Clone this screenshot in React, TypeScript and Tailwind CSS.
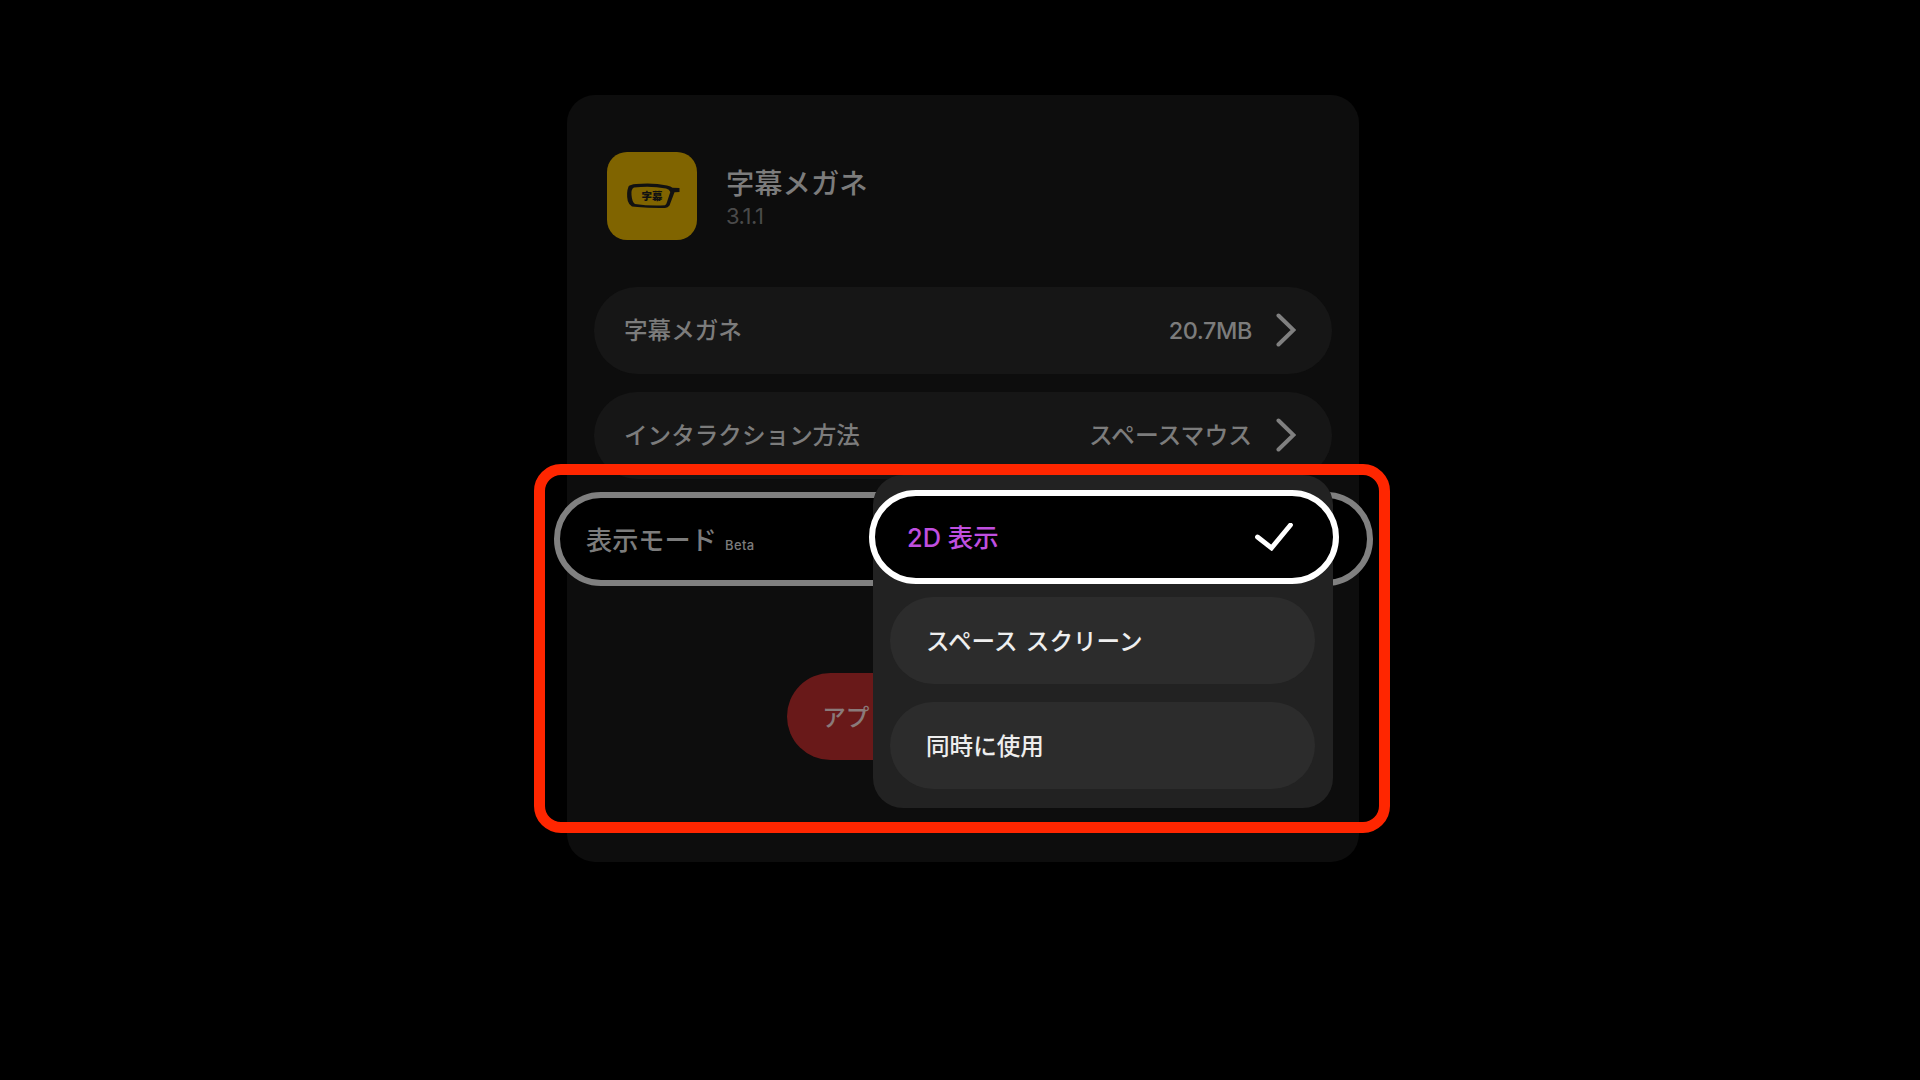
import { useState } from 'react';

const ROWS = [
  { label: '字幕メガネ', value: '20.7MB', latin: true },
  { label: 'インタラクション方法', value: 'スペースマウス', latin: false },
];

const OPTIONS = ['スペース スクリーン', '同時に使用'];

function AppIcon() {
  return (
    <div className="w-[90px] h-[88px] rounded-[20px] bg-[#806400] shrink-0">
      <svg viewBox="0 0 90 88" className="w-full h-full">
        <path
          fillRule="evenodd"
          fill="#111"
          d="M21.5 34.5 Q23 32.5 29 32 Q46 30.5 60 33.4 Q64 34.3 65.5 35.8 L72.5 36 L72.5 40 L67.5 40.3 L62.5 53.5 Q61 55.9 58 56 Q43 56.3 30.5 55 L25 54.5 Q22 53 20.8 49 Q19 41 21.5 34.5 Z M27 35.5 Q23.8 37 24.5 43 Q25 50 28 52 Q43 54.2 58 53.3 Q59.2 53 60 50 L63.3 40 Q62.5 37.5 59 36.6 Q44 33.5 27 35.5 Z"
        />
        <text x="34.5" y="48" fontSize="10.5" fontWeight="900" fill="#111" fontFamily="Noto Sans CJK JP, sans-serif">字幕</text>
      </svg>
    </div>
  );
}

function Chevron() {
  return (
    <svg width="20" height="34" viewBox="0 0 20 34" fill="none" className="ml-6 mb-[2px] shrink-0">
      <path d="M2.5 2.5 L17.5 17 L2.5 31.5" stroke="#808080" strokeWidth="4" strokeLinecap="round" />
    </svg>
  );
}

export default function App() {
  const [selected] = useState('2D 表示');

  return (
    <div className="relative w-[1920px] h-[1080px] overflow-hidden bg-black pt-[95px] pl-[567px] font-['Inter','Noto_Sans_CJK_JP',sans-serif] font-medium text-[23.6px] leading-none text-[#7c7c7c]">
      <div className="w-[792px] h-[767px] rounded-[28px] bg-[#0d0d0d] px-[27px] pt-[57px]">
        <div className="flex pl-[13px] h-[135px]">
          <AppIcon />
          <div className="ml-[29px] pt-[18px]">
            <h1 className="text-[28.3px] leading-[28px]">字幕メガネ</h1>
            <p className="mt-[7px] text-[22px] leading-[22px] tracking-[-0.5px] font-normal text-[#4a4a4a]">3.1.1</p>
          </div>
        </div>

        <div className="flex flex-col gap-[18px]">
          {ROWS.map(row => (
            <div key={row.label} className="flex items-center h-[87px] rounded-full bg-[#161616] pl-[30px] pr-9">
              <span className="mt-px">{row.label}</span>
              <span className={row.latin ? 'ml-auto text-[23.4px] tracking-[-0.4px]' : 'ml-auto mt-px text-[23.8px]'}>{row.value}</span>
              <Chevron />
            </div>
          ))}
        </div>

        {/* Focused row, wider than the card */}
        <div className="-mx-[40px] w-[819px] mt-[13px] h-[94px] flex items-center rounded-full border-[6px] border-[#808080] bg-black pl-[26px]">
          <span className="mt-[5px] text-[26.2px]">表示モード</span>
          <span className="ml-2 mt-[12px] text-[13px] tracking-[0.4px]">Beta</span>
        </div>

        <button className="block mx-auto mt-[87px] w-[352px] h-[87px] pt-[2px] rounded-full bg-[#691919] text-[#8a7a7a]">
          アプリをアンインストール
        </button>
      </div>

      {/* Dropdown */}
      <div className="absolute left-[873px] top-[475px] w-[460px] h-[333px] rounded-[30px] bg-[#222] pl-[17px] pr-[18px] pt-[15px]">
        <div className="-ml-[21px] w-[470px] h-[94px] flex items-center rounded-full border-[6px] border-white bg-black pl-[32px] pr-[40px]">
          <span className="mt-px text-[25.4px] text-[#c04fe0]">{selected}</span>
          <svg width="38" height="28" viewBox="0 0 38 28" fill="none" className="ml-auto">
            <path d="M2.5 14 L16.5 25 L35.5 2" stroke="#fff" strokeWidth="4.8" strokeLinecap="round" />
          </svg>
        </div>
        <div className="flex flex-col gap-[18px] mt-[13px]">
          {OPTIONS.map(option => (
            <div key={option} className="flex items-center h-[87px] rounded-full bg-[#2c2c2c] pl-9 pt-[3px] text-[#eee] [word-spacing:2px]">
              {option}
            </div>
          ))}
        </div>
      </div>

      {/* Highlight frame */}
      <div className="absolute left-[534px] top-[464px] w-[856px] h-[369px] rounded-[27px] border-[11px] border-[#ff2600]" />
    </div>
  );
}
